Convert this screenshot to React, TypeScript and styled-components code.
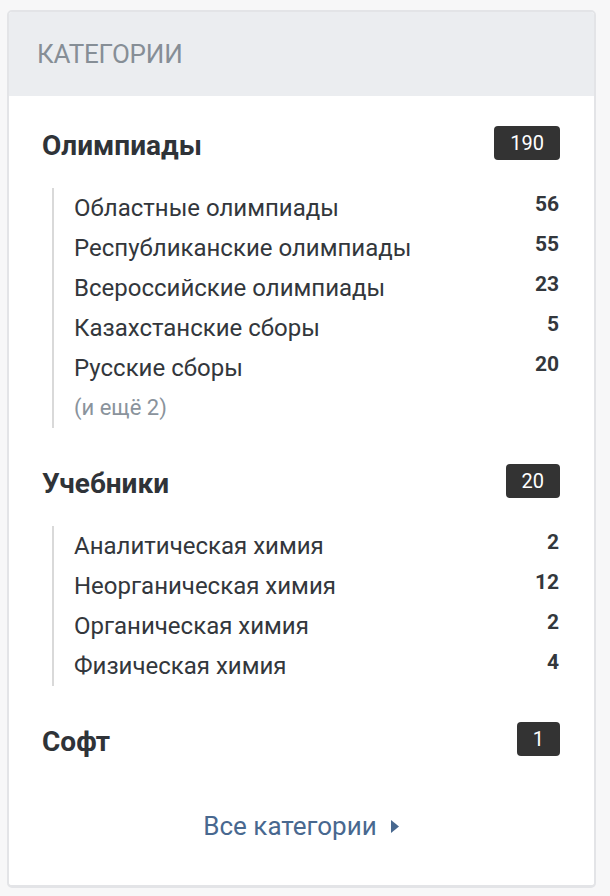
import React from "react";
import styled, { createGlobalStyle } from "styled-components";

const Global = createGlobalStyle`
  html, body { margin: 0; padding: 0; background: #f7f7f8; }
  body { font-family: Roboto, "Noto Sans", "Liberation Sans", sans-serif; }
`;

const Page = styled.div`
  padding: 10px 14px 8px 7px;
`;

const Card = styled.section`
  background: #ffffff;
  border: 2px solid #e3e4e7;
  border-bottom-width: 3px;
  border-radius: 5px;
  overflow: hidden;
`;

const Header = styled.div`
  height: 84px;
  display: flex;
  align-items: center;
  padding: 0 28px;
  background: #ebedf0;
  color: #868e96;
  font-size: 26px;
  text-transform: uppercase;
  letter-spacing: -0.2px;
`;

const Body = styled.div`
  padding: 30px 34px 39px 33px;
`;

const Group = styled.div`
  & + & { margin-top: 36px; }
`;

const GroupRow = styled.div`
  display: flex;
  justify-content: space-between;
  align-items: flex-start;
`;

const GroupTitle = styled.a`
  font-size: 28px;
  line-height: 40px;
  font-weight: 700;
  color: #2f3338;
  text-decoration: none;
`;

const Badge = styled.span`
  height: 34px;
  padding: 0 16px;
  display: inline-flex;
  align-items: center;
  background: #333333;
  color: #ffffff;
  border-radius: 4px;
  font-size: 20px;
`;

const SubList = styled.ul`
  list-style: none;
  margin: 22px 0 0 10px;
  padding: 0 0 0 20px;
  border-left: 2px solid #d9d9d9;
`;

const SubItem = styled.li`
  display: flex;
  justify-content: space-between;
  align-items: flex-start;
  height: 40px;
`;

const SubName = styled.span<{ $muted?: boolean }>`
  font-size: ${(p) => (p.$muted ? "22px" : "24px")};
  line-height: 40px;
  color: ${(p) => (p.$muted ? "#8a939c" : "#33373c")};
`;

const SubCount = styled.span`
  font-size: 21px;
  line-height: 33px;
  font-weight: 700;
  color: #33373c;
  margin-right: 1px;
`;

const Footer = styled.div`
  margin-top: 44px;
  display: flex;
  justify-content: center;
`;

const AllLink = styled.a`
  display: inline-flex;
  align-items: center;
  gap: 14px;
  font-size: 26px;
  line-height: 40px;
  color: #48688f;
  text-decoration: none;
`;

type Sub = { name: string; count?: number; muted?: boolean };
type Cat = { title: string; total: number; subs: Sub[] };

const data: Cat[] = [
  {
    title: "Олимпиады",
    total: 190,
    subs: [
      { name: "Областные олимпиады", count: 56 },
      { name: "Республиканские олимпиады", count: 55 },
      { name: "Всероссийские олимпиады", count: 23 },
      { name: "Казахстанские сборы", count: 5 },
      { name: "Русские сборы", count: 20 },
      { name: "(и ещё 2)", muted: true },
    ],
  },
  {
    title: "Учебники",
    total: 20,
    subs: [
      { name: "Аналитическая химия", count: 2 },
      { name: "Неорганическая химия", count: 12 },
      { name: "Органическая химия", count: 2 },
      { name: "Физическая химия", count: 4 },
    ],
  },
  { title: "Софт", total: 1, subs: [] },
];

export default function App() {
  return (
    <>
      <Global />
      <Page>
        <Card>
          <Header>Категории</Header>
          <Body>
            {data.map((c) => (
              <Group key={c.title}>
                <GroupRow>
                  <GroupTitle href="#">{c.title}</GroupTitle>
                  <Badge>{c.total}</Badge>
                </GroupRow>
                {c.subs.length > 0 && (
                  <SubList>
                    {c.subs.map((s) => (
                      <SubItem key={s.name}>
                        <SubName $muted={s.muted}>{s.name}</SubName>
                        {s.count !== undefined && <SubCount>{s.count}</SubCount>}
                      </SubItem>
                    ))}
                  </SubList>
                )}
              </Group>
            ))}
            <Footer>
              <AllLink href="#">
                Все категории
                <svg width="8" height="13" viewBox="0 0 8 13" aria-hidden="true">
                  <path d="M0 0 L8 6.5 L0 13 Z" fill="currentColor" />
                </svg>
              </AllLink>
            </Footer>
          </Body>
        </Card>
      </Page>
    </>
  );
}
